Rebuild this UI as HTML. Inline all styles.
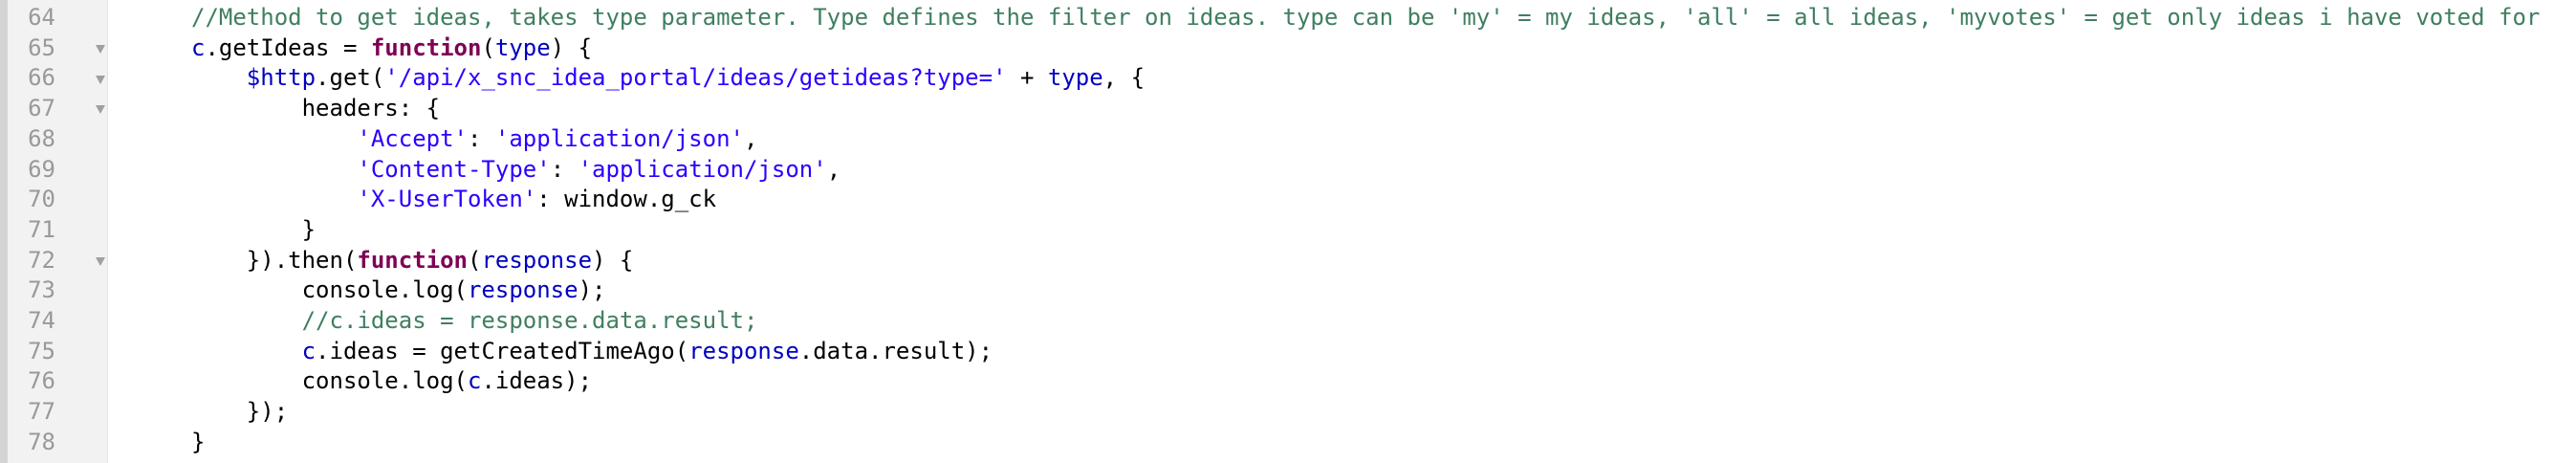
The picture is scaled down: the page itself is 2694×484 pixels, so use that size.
<!DOCTYPE html>
<html><head><style>
body{margin:0;width:2694px;height:484px;background:#fff;overflow:hidden;position:relative}
#bar{position:absolute;left:0;top:0;width:8px;height:484px;background:#d4d4d4}
#gut{position:absolute;left:8px;top:0;width:104px;height:484px;background:#f2f2f2;border-right:1px solid #e2e2e2}
.l{position:absolute;left:0;height:31.7px;line-height:31.7px;font-family:"DejaVu Sans Mono","Liberation Mono",monospace;font-size:24px;letter-spacing:0;white-space:pre}
.n{width:58px;text-align:right;color:#999;left:0}
.t{position:absolute;left:100px;width:0;height:0;border-left:5px solid transparent;border-right:5px solid transparent;border-top:9px solid #a0a0a0}
.c{left:200px;color:#000}
.cm{color:#3f7f5f}.k{color:#7f0055;font-weight:bold}.v{color:#0000c0}.s{color:#2a00ff}
</style></head><body>
<div id="bar"></div><div id="gut"></div>
<div class="l n" style="top:3px">64</div>
<div class="l n" style="top:34.7px">65</div>
<div class="l n" style="top:66.4px">66</div>
<div class="l n" style="top:98.1px">67</div>
<div class="l n" style="top:129.8px">68</div>
<div class="l n" style="top:161.5px">69</div>
<div class="l n" style="top:193.2px">70</div>
<div class="l n" style="top:224.9px">71</div>
<div class="l n" style="top:256.6px">72</div>
<div class="l n" style="top:288.3px">73</div>
<div class="l n" style="top:320px">74</div>
<div class="l n" style="top:351.7px">75</div>
<div class="l n" style="top:383.4px">76</div>
<div class="l n" style="top:415.1px">77</div>
<div class="l n" style="top:446.8px">78</div>
<div class="t" style="top:47px"></div>
<div class="t" style="top:79px"></div>
<div class="t" style="top:110px"></div>
<div class="t" style="top:269px"></div>
<div class="l c" style="top:3px"><span class="cm">//Method to get ideas, takes type parameter. Type defines the filter on ideas. type can be 'my' = my ideas, 'all' = all ideas, 'myvotes' = get only ideas i have voted for</span></div>
<div class="l c" style="top:34.7px"><span class="v">c</span>.getIdeas = <span class="k">function</span>(<span class="v">type</span>) {</div>
<div class="l c" style="top:66.4px">    <span class="v">$http</span>.get(<span class="s">'/api/x_snc_idea_portal/ideas/getideas?type='</span> + <span class="v">type</span>, {</div>
<div class="l c" style="top:98.1px">        headers: {</div>
<div class="l c" style="top:129.8px">            <span class="s">'Accept'</span>: <span class="s">'application/json'</span>,</div>
<div class="l c" style="top:161.5px">            <span class="s">'Content-Type'</span>: <span class="s">'application/json'</span>,</div>
<div class="l c" style="top:193.2px">            <span class="s">'X-UserToken'</span>: window.g_ck</div>
<div class="l c" style="top:224.9px">        }</div>
<div class="l c" style="top:256.6px">    }).then(<span class="k">function</span>(<span class="v">response</span>) {</div>
<div class="l c" style="top:288.3px">        console.log(<span class="v">response</span>);</div>
<div class="l c" style="top:320px">        <span class="cm">//c.ideas = response.data.result;</span></div>
<div class="l c" style="top:351.7px">        <span class="v">c</span>.ideas = getCreatedTimeAgo(<span class="v">response</span>.data.result);</div>
<div class="l c" style="top:383.4px">        console.log(<span class="v">c</span>.ideas);</div>
<div class="l c" style="top:415.1px">    });</div>
<div class="l c" style="top:446.8px">}</div>
</body></html>
